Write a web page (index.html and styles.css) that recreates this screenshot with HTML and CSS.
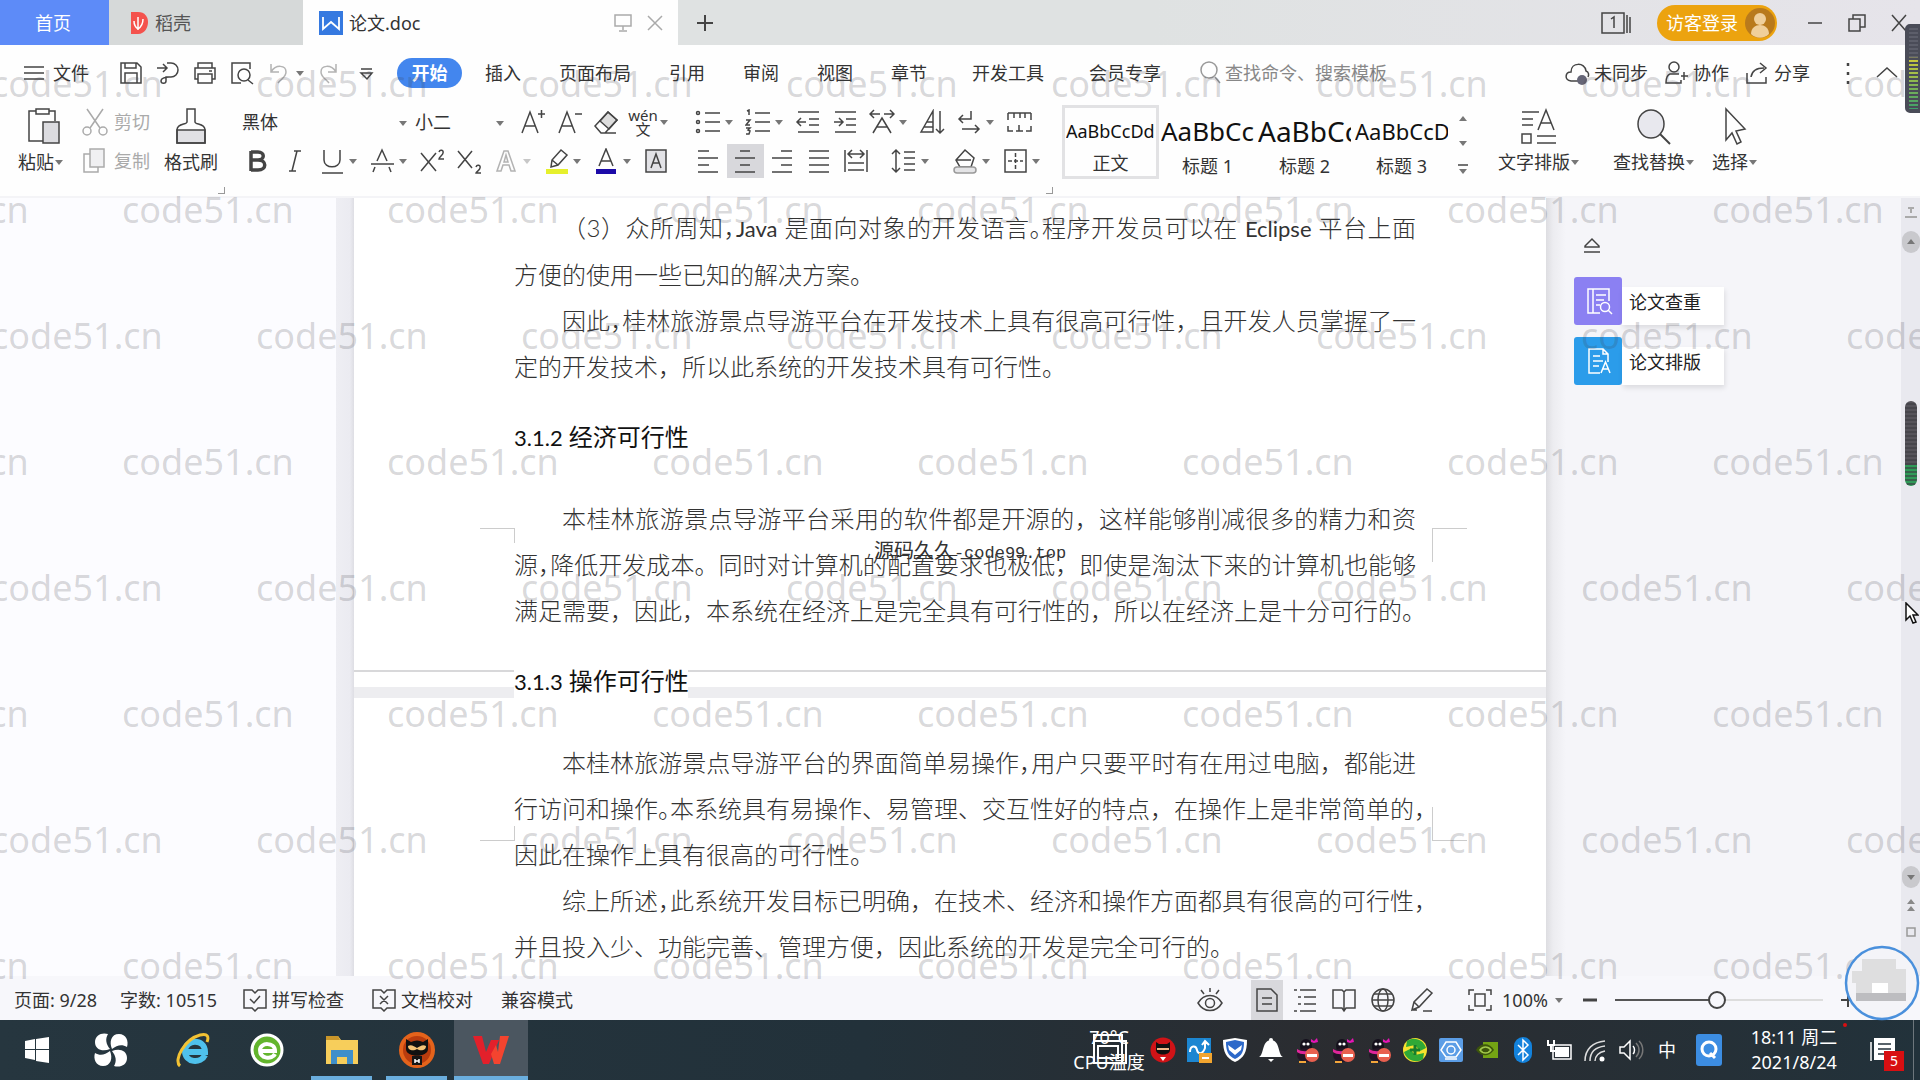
FILE: index.html
```html
<!DOCTYPE html>
<html lang="zh-CN">
<head>
  <meta charset="UTF-8" />
  <meta name="viewport" content="width=device-width, initial-scale=1.0" />
  <title>论文.doc</title>
  <link rel="stylesheet" href="styles.css">
</head>
<body>
  <svg class="sprite" aria-hidden="true">
    <symbol id="caret" viewBox="0 0 10 8"><path d="M1 2h8L5 7z" fill="#777" stroke="none"/></symbol>
    <symbol id="penguin" viewBox="0 0 26 26">
      <ellipse cx="12" cy="9" rx="6" ry="7" fill="#15101c"/><ellipse cx="12" cy="18" rx="9" ry="7" fill="#231526"/>
      <circle cx="10" cy="7" r="1.600" fill="#fff"/><circle cx="14" cy="7" r="1.600" fill="#fff"/>
      <path d="M17 2l3 2 3-3 1 4-4 1-3-1z" fill="#e515b5"/><path d="M3 12c5 3 11 3 15 0l1 3c-5 3-12 3-16 0z" fill="#e0259a"/>
      <circle cx="18" cy="18" r="7" fill="#e8604f"/><rect x="13" y="17" width="10" height="3" fill="#fff"/><path d="M5 25h7" stroke="#f3a63b" stroke-width="2"/>
    </symbol>
  </svg>

  <!-- Barra de abas -->
  <header class="titlebar">
    <button class="tab home">首页</button>
    <button class="tab docer">
      <svg width="20" height="24" viewBox="0 0 20 24"><path d="M2 1h7c7 0 10 5 10 10s-3 12-10 12H2z" fill="#f4524d"/><path d="M9 6v13M5 10c0 4 1 6 4 8M14 8c0 5-2 8-5 10" stroke="#fff" stroke-width="1.500" fill="none"/></svg>
      稻壳
    </button>
    <div class="tab active">
      <svg width="24" height="24" viewBox="0 0 24 24"><path d="M0 0h24v24H0z" fill="#3579e0"/><path d="M4 6v12l8-7 8 7V6" stroke="#fff" stroke-width="1.800" fill="none"/></svg>
      <span>论文.doc</span>
      <button class="mini push" aria-label="显示"><svg width="20" height="20" viewBox="0 0 20 20"><path d="M2 2h16v11H2zM10 13v4M6 18h8" stroke="#aaa"/></svg></button>
      <button class="mini" aria-label="关闭标签"><svg width="20" height="20" viewBox="0 0 20 20"><path d="M3 3l14 14M17 3L3 17" stroke="#999"/></svg></button>
    </div>
    <button class="mini add" aria-label="新建"><svg width="20" height="20" viewBox="0 0 20 20"><path d="M10 2v16M2 10h16" stroke-width="2"/></svg></button>
    <div class="window-tools">
      <button class="mini" aria-label="窗口"><svg width="32" height="24" viewBox="0 0 32 24"><path d="M2 2h22v20H2zM27 4v18M30 6v16M11 8l3-2v11"/></svg></button>
      <button class="login">访客登录
        <svg width="30" height="30" viewBox="0 0 30 30"><circle cx="15" cy="15" r="15" fill="#b97a1c"/><circle cx="15" cy="11" r="6" fill="#f0cf9a"/><path d="M6 26c0-12 18-12 18 0-5 5-13 5-18 0z" fill="#f0cf9a"/></svg>
      </button>
      <button class="mini win" aria-label="最小化"><svg width="20" height="20" viewBox="0 0 20 20"><path d="M3 10h14"/></svg></button>
      <button class="mini win" aria-label="还原"><svg width="20" height="20" viewBox="0 0 20 20"><path d="M2 6h11v12H2zM6 6V2h12v12h-5"/></svg></button>
      <button class="mini win" aria-label="关闭"><svg width="20" height="20" viewBox="0 0 20 20"><path d="M3 2l14 16M17 2L3 18"/></svg></button>
    </div>
  </header>

  <!-- Menu -->
  <nav class="menubar">
    <button class="file"><svg width="22" height="18" viewBox="0 0 22 18"><path d="M1 3h20M1 9h20M1 15h20"/></svg>文件</button>
    <div class="quick">
      <button aria-label="保存"><svg width="26" height="26" viewBox="0 0 26 26"><path d="M3 3h16l4 4v16H3zM7 3v5h11V3M7 23V13h12v10"/></svg></button>
      <button aria-label="输出"><svg width="26" height="26" viewBox="0 0 26 26"><path d="M2 8h9M8 4l4 4-4 4M12 3h4a7 7 0 0 1 0 14h-5v4c0 3-5 3-5 0s5-4 8-4"/></svg></button>
      <button aria-label="打印"><svg width="26" height="26" viewBox="0 0 26 26"><path d="M6 8V3h14v5M6 19H3V8h20v11h-3M6 14h14v9H6zM17 11h3"/></svg></button>
      <button aria-label="打印预览"><svg width="26" height="26" viewBox="0 0 26 26"><path d="M12 23H3V3h18v6M19 20l5 4"/><circle cx="15" cy="15" r="6"/></svg></button>
      <button aria-label="撤销" class="off"><svg width="26" height="26" viewBox="0 0 26 26"><path d="M5 4v8h8M5 12c5-8 15-7 15 0 0 5-4 6-8 11"/></svg></button>
      <svg class="caret" width="10" height="8"><use href="#caret"/></svg>
      <button aria-label="恢复" class="off redo"><svg width="26" height="26" viewBox="0 0 26 26"><path d="M20 4v8h-8M20 12c-5-8-15-7-15 0 0 5 4 6 8 11"/></svg></button>
      <button aria-label="更多"><svg width="26" height="26" viewBox="0 0 26 26"><path d="M8 9h11M8 13h11l-5 6z"/></svg></button>
    </div>
    <div class="menu">
      <button class="on">开始</button>
      <button>插入</button>
      <button>页面布局</button>
      <button>引用</button>
      <button>审阅</button>
      <button>视图</button>
      <button>章节</button>
      <button class="wide">开发工具</button>
      <button class="wide">会员专享</button>
    </div>
    <div class="search">
      <svg width="22" height="26" viewBox="0 0 22 26"><circle cx="10" cy="10" r="8"/><path d="M16 17l5 6"/></svg>
      <input type="text" aria-label="搜索" placeholder="查找命令、搜索模板">
    </div>
    <div class="share">
      <button><svg width="26" height="26" viewBox="0 0 26 26"><path d="M14 21H7c-7-1-6-9 0-9 0-10 14-10 15-1 3 1 3 4 2 6"/><circle cx="18" cy="20" r="5" fill="#667" stroke="none"/></svg>未同步</button>
      <button><svg width="26" height="26" viewBox="0 0 26 26"><circle cx="11" cy="7" r="5"/><path d="M16 14H7c-3 1-4 4-4 9h15v-3M18 16h7M21 12v8"/></svg>协作</button>
      <button><svg width="26" height="26" viewBox="0 0 26 26"><path d="M3 13v10h19v-6M7 17c1-7 6-9 13-9M16 3l6 5-6 5"/></svg>分享</button>
      <button aria-label="更多选项"><svg width="8" height="26" viewBox="0 0 8 26"><path d="M4 3v3M4 12v3M4 21v3" stroke-width="2.500"/></svg></button>
      <button aria-label="折叠"><svg width="24" height="26" viewBox="0 0 24 26"><path d="M2 17L12 8l10 9"/></svg></button>
    </div>
  </nav>

  <!-- Faixa de ferramentas -->
  <section class="ribbon">
    <button class="big paste">
      <svg width="36" height="38" viewBox="0 0 36 38"><path d="M10 4H3v30h14M23 4h6v10M10 2h13v5H10z"/><path d="M17 15h16v21H17z" fill="#dcdce0"/></svg>
      <span>粘贴<svg width="10" height="8"><use href="#caret"/></svg></span>
    </button>
    <div class="clip">
      <button><svg width="26" height="30" viewBox="0 0 26 30"><path d="M5 2l13 19M21 2L8 21"/><circle cx="5" cy="24" r="4"/><circle cx="21" cy="24" r="4"/></svg>剪切</button>
      <button><svg width="26" height="30" viewBox="0 0 26 30"><path d="M8 8H2v18h14v-5"/><path d="M8 3h14v18H8z" fill="#f0f0f2"/></svg>复制</button>
    </div>
    <button class="big painter">
      <svg width="36" height="38" viewBox="0 0 36 38"><path d="M4 23h28v13H4z" fill="#e0e0e4"/><path d="M14 2h8v13c0 3 10 1 10 8v13H4V23c0-7 10-5 10-8z"/></svg>
      <span>格式刷</span>
    </button>

    <div class="tools font">
      <div class="row">
        <span class="pick family"><select aria-label="字体"><option>黑体</option></select><svg width="10" height="8"><use href="#caret"/></svg></span>
        <span class="pick size"><select aria-label="字号"><option>小二</option></select><svg width="10" height="8"><use href="#caret"/></svg></span>
        <button class="tool" aria-label="增大字号"><svg width="26" height="26" viewBox="0 0 26 26"><path d="M3 24L11 3l8 21M6 17h10M19 5h7M22.500 1v8"/></svg></button>
        <button class="tool" aria-label="减小字号"><svg width="26" height="26" viewBox="0 0 26 26"><path d="M3 24L11 3l8 21M6 17h10M19 5h7"/></svg></button>
        <button class="tool" aria-label="清除格式"><svg width="26" height="26" viewBox="0 0 26 26"><path d="M7 12l8-9 9 8-8 9z" fill="#ddd"/><path d="M2 17L15 3l9 8-12 13H8zM8 24h15"/></svg></button>
        <button class="tool drop pinyin" aria-label="拼音指南"><span><b>wén</b><b>文</b></span><svg width="10" height="8"><use href="#caret"/></svg></button>
      </div>
      <div class="row">
        <button class="tool" aria-label="加粗"><svg width="26" height="26" viewBox="0 0 26 26"><path d="M6 3v20M6 4h7c7 0 7 8 0 8H6M13 12c9 0 9 10 0 10H6" stroke-width="3.500"/></svg></button>
        <button class="tool" aria-label="倾斜"><svg width="26" height="26" viewBox="0 0 26 26"><path d="M12 3h7M7 23h7M15 3l-5 20"/></svg></button>
        <button class="tool drop" aria-label="下划线"><svg width="26" height="26" viewBox="0 0 26 26"><path d="M5 2v10c0 9 16 9 16 0V2M3 25h21"/></svg><svg width="10" height="8"><use href="#caret"/></svg></button>
        <button class="tool drop" aria-label="删除线"><svg width="26" height="26" viewBox="0 0 26 26"><path d="M8 13l5-11 5 11M2 16h23M6 19l-2 5M20 19l2 5"/></svg><svg width="10" height="8"><use href="#caret"/></svg></button>
        <button class="tool" aria-label="上标"><svg width="26" height="26" viewBox="0 0 26 26"><path d="M2 5l15 18M17 5L2 23M20 4c1-3 5-2 4 1 0 2-4 4-4 6h5"/></svg></button>
        <button class="tool" aria-label="下标"><svg width="26" height="26" viewBox="0 0 26 26"><path d="M2 3l14 17M16 3L2 20M20 19c1-3 5-2 4 1 0 2-4 4-4 5h5"/></svg></button>
        <button class="tool drop off" aria-label="文字效果"><svg width="26" height="26" viewBox="0 0 26 26"><path d="M4 23L11 3h4l7 20h-4l-2-6h-6l-2 6zM11 14h4l-2-7z"/></svg><svg width="10" height="8"><use href="#caret"/></svg></button>
        <button class="tool drop" aria-label="突出显示"><svg width="26" height="26" viewBox="0 0 26 26"><path d="M3 21h22v5H3z" fill="#e6f02c" stroke="none"/><path d="M8 19l1-7 9-10 6 5-9 10zM9 12l6 5"/></svg><svg width="10" height="8"><use href="#caret"/></svg></button>
        <button class="tool drop" aria-label="字体颜色"><svg width="26" height="26" viewBox="0 0 26 26"><path d="M3 21h20v5H3z" fill="#1c0aa8" stroke="none"/><path d="M6 18l7-17 7 17M8 13h10"/></svg><svg width="10" height="8"><use href="#caret"/></svg></button>
        <button class="tool" aria-label="字符底纹"><svg width="26" height="26" viewBox="0 0 26 26"><path d="M3 2h20v22H3z" fill="#e2e2e6"/><path d="M8 20l5-14 5 14M10 15h6"/></svg></button>
      </div>
    </div>

    <div class="tools para">
      <div class="row">
        <button class="tool drop" aria-label="项目符号"><svg width="26" height="26" viewBox="0 0 26 26"><path d="M10 4h15M10 13h15M10 22h15"/><circle cx="3" cy="4" r="1.500"/><circle cx="3" cy="13" r="1.500"/><circle cx="3" cy="22" r="1.500"/></svg><svg width="10" height="8"><use href="#caret"/></svg></button>
        <button class="tool drop" aria-label="编号"><svg width="26" height="26" viewBox="0 0 26 26"><path d="M10 4h15M10 13h15M10 22h15M2 2l2-1v5M1 11h4l-4 5h4M1 19h4l-2 2 2 1-1 3H1"/></svg><svg width="10" height="8"><use href="#caret"/></svg></button>
        <button class="tool" aria-label="减少缩进"><svg width="26" height="26" viewBox="0 0 26 26"><path d="M3 3h21M14 10h10M14 16h10M3 23h21M2 13h9M6 9l-4 4 4 4"/></svg></button>
        <button class="tool" aria-label="增加缩进"><svg width="26" height="26" viewBox="0 0 26 26"><path d="M3 3h21M14 10h10M14 16h10M3 23h21M2 13h9M7 9l4 4-4 4"/></svg></button>
        <button class="tool drop" aria-label="中文版式"><svg width="26" height="26" viewBox="0 0 26 26"><path d="M4 24l9-15 9 15M8 18h10M1 5h10M5 1L1 5l4 4M15 5h10M21 1l4 4-4 4"/></svg><svg width="10" height="8"><use href="#caret"/></svg></button>
        <button class="tool" aria-label="排序"><svg width="26" height="26" viewBox="0 0 26 26"><path d="M2 23L14 2v21zM8 13h6M5 18h9M21 2v22M17 20l4 4 4-4"/></svg></button>
        <button class="tool drop" aria-label="换行符"><svg width="26" height="26" viewBox="0 0 26 26"><path d="M15 2v8H3M7 6l-4 4 4 4M6 20h17M19 16l4 4-4 4"/></svg><svg width="10" height="8"><use href="#caret"/></svg></button>
        <button class="tool" aria-label="标尺"><svg width="26" height="26" viewBox="0 0 26 26"><path d="M2 4h23M2 4v7M8 4v5M14 4v5M19 4v5M25 4v7M2 17v5h5M13 16v6M10 22h7M25 17v5h-5"/></svg></button>
      </div>
      <div class="row">
        <button class="tool" aria-label="左对齐"><svg width="26" height="26" viewBox="0 0 26 26"><path d="M3 3h11M3 10h20M3 17h11M3 24h20"/></svg></button>
        <button class="tool pressed" aria-label="居中"><svg width="26" height="26" viewBox="0 0 26 26"><path d="M8 3h10M3 10h20M8 17h10M3 24h20"/></svg></button>
        <button class="tool" aria-label="右对齐"><svg width="26" height="26" viewBox="0 0 26 26"><path d="M12 3h11M3 10h20M12 17h11M3 24h20"/></svg></button>
        <button class="tool" aria-label="两端对齐"><svg width="26" height="26" viewBox="0 0 26 26"><path d="M3 3h20M3 10h20M3 17h20M3 24h20"/></svg></button>
        <button class="tool" aria-label="分散对齐"><svg width="26" height="26" viewBox="0 0 26 26"><path d="M2 2v22M24 2v22M5 15h16M5 22h16M5 6h16M9 2L5 6l4 4M17 2l4 4-4 4"/></svg></button>
        <button class="tool drop spaced" aria-label="行距"><svg width="26" height="26" viewBox="0 0 26 26"><path d="M5 2v22M1 6l4-4 4 4M1 20l4 4 4-4M13 4h11M13 10h11M13 16h11M13 22h11"/></svg><svg width="10" height="8"><use href="#caret"/></svg></button>
        <button class="tool drop spaced" aria-label="底纹"><svg width="26" height="26" viewBox="0 0 26 26"><path d="M4 12L13 2l9 8-3 9H8zM4 12h15"/><rect x="2" y="19" width="22" height="6" rx="3" fill="#e4e4e6" stroke="#999"/></svg><svg width="10" height="8"><use href="#caret"/></svg></button>
        <button class="tool drop" aria-label="边框"><svg width="26" height="26" viewBox="0 0 26 26"><path d="M3 2h21v22H3z"/><path d="M13.500 5v16M6 13h15" stroke-dasharray="4 2"/></svg><svg width="10" height="8"><use href="#caret"/></svg></button>
      </div>
    </div>

    <div class="styles">
      <button class="style chosen"><span class="s18">AaBbCcDd</span>正文</button>
      <button class="style"><span class="s26">AaBbCc</span>标题 1</button>
      <button class="style"><span class="s28">AaBbCc</span>标题 2</button>
      <button class="style"><span class="s22">AaBbCcD</span>标题 3</button>
      <div class="arrows">
        <button aria-label="上一行"><svg class="up" width="10" height="8"><use href="#caret"/></svg></button>
        <button aria-label="下一行"><svg width="10" height="8"><use href="#caret"/></svg></button>
        <button aria-label="展开"><svg width="10" height="12" viewBox="0 0 10 12"><path d="M0 2h10"/><path d="M1 6h8l-4 5z" fill="#777" stroke="none"/></svg></button>
      </div>
    </div>
    <button class="big layout">
      <svg width="36" height="38" viewBox="0 0 36 38"><path d="M1 5h17M1 12h11M1 18h11M1 27h9v9H1zM16 29h19M16 36h19M17 23l8-20 8 20M20 16h10"/></svg>
      <span>文字排版<svg width="10" height="8"><use href="#caret"/></svg></span>
    </button>
    <button class="big find">
      <svg width="36" height="38" viewBox="0 0 36 38"><ellipse cx="15" cy="17" rx="13" ry="14" fill="#e8e8ee"/><path d="M24 27l10 10" stroke-width="2"/></svg>
      <span>查找替换<svg width="10" height="8"><use href="#caret"/></svg></span>
    </button>
    <button class="big choose">
      <svg width="36" height="38" viewBox="0 0 36 38"><path d="M9 2l19 20-9 2 5 11-4 2-5-11-6 7z"/></svg>
      <span>选择<svg width="10" height="8"><use href="#caret"/></svg></span>
    </button>
  </section>

  <main class="workspace">
    <div class="gutter"></div>

    <article class="paper">
      <div class="page-gap"></div>
      <i class="crop foot left"></i><i class="crop foot right"></i>
      <i class="crop head left"></i><i class="crop head right"></i>

      <p>
        <span class="first">（3）众所周知<em>，</em><b>Java</b> 是面向对象的开发语言<em>。</em>程序开发员可以在 <b>Eclipse</b> 平台上面</span>
        <span class="end">方便的使用一些已知的解决方案。</span>
      </p>
      <p>
        <span class="first">因此<em>，</em>桂林旅游景点导游平台在开发技术上具有很高可行性，且开发人员掌握了一</span>
        <span class="end">定的开发技术，所以此系统的开发技术具有可行性。</span>
      </p>
      <h3><b>3.1.2</b> 经济可行性</h3>
      <p>
        <span class="first">本桂林旅游景点导游平台采用的软件都是开源的，这样能够削减很多的精力和资</span>
        <span>源<em>，</em>降低开发成本。同时对计算机的配置要求也极低，即使是淘汰下来的计算机也能够</span>
        <span>满足需要，因此，本系统在经济上是完全具有可行性的，所以在经济上是十分可行的。</span>
      </p>
      <h3><b>3.1.3</b> 操作可行性</h3>
      <p>
        <span class="first">本桂林旅游景点导游平台的界面简单易操作<em>，</em>用户只要平时有在用过电脑，都能进</span>
        <span>行访问和操作<em>。</em>本系统具有易操作、易管理、交互性好的特点，在操作上是非常简单的<em>，</em></span>
        <span class="end">因此在操作上具有很高的可行性。</span>
      </p>
      <p>
        <span class="first">综上所述<em>，</em>此系统开发目标已明确，在技术、经济和操作方面都具有很高的可行性<em>，</em></span>
        <span class="end">并且投入少、功能完善、管理方便，因此系统的开发是完全可行的。</span>
      </p>
    </article>

    <aside class="panel">
      <button class="eject" aria-label="收起"><svg width="18" height="18" viewBox="0 0 18 18"><path d="M2 10l7-7 7 7v1H2zM1 16h16"/></svg></button>
      <button class="card purple">
        <svg width="48" height="48" viewBox="0 0 48 48"><path d="M26 36H14V12h21v12M19 12v24M22 18h10M22 23h8M22 28h4M34 33l4 4"/><circle cx="31" cy="30" r="4.500"/></svg>
        <span>论文查重</span>
      </button>
      <button class="card blue">
        <svg width="48" height="48" viewBox="0 0 48 48"><path d="M26 36H15V12h14l5 5v8M29 12v5h5M19 19h7M19 24h10M19 29h6M27 36l4.500-11L36 36M29 32h5"/></svg>
        <span>论文排版</span>
      </button>
    </aside>

    <div class="scrollbar">
      <svg class="split" width="12" height="12" viewBox="0 0 12 12"><path d="M3 1h6M6 1v5M0 10h12" stroke="#aaa" stroke-width="2"/></svg>
      <button class="knob" aria-label="向上"><svg width="10" height="8" class="up"><use href="#caret"/></svg></button>
      <div class="thumb"></div>
      <button class="knob down" aria-label="向下"><svg width="10" height="8"><use href="#caret"/></svg></button>
      <svg width="12" height="14" viewBox="0 0 12 14"><path d="M6 1l4 5H2zM6 8l4 5H2z" fill="#888" stroke="none"/></svg>
      <svg class="ball" width="12" height="12" viewBox="0 0 12 12"><path d="M2 2h8v8H2z" stroke="#999"/></svg>
    </div>
  </main>

  <!-- Barra de status -->
  <footer class="status">
    <span class="pages">页面: 9/28</span>
    <span class="words">字数: 10515</span>
    <button class="check"><svg width="24" height="24" viewBox="0 0 24 24"><path d="M1 2h8l3 3 3-3h8v18h-8l-3 3-3-3H1zM7 11l4 4 6-7"/></svg>拼写检查</button>
    <button class="check"><svg width="24" height="24" viewBox="0 0 24 24"><path d="M1 2h8l3 3 3-3h8v18h-8l-3 3-3-3H1zM8 8l8 8M16 8l-8 8"/></svg>文档校对</button>
    <span>兼容模式</span>
    <div class="views">
      <button class="eye" aria-label="护眼"><svg width="26" height="26" viewBox="0 0 26 26"><path d="M1 16c6-10 18-10 24 0-6 10-18 10-24 0zM13 1v4M4 3l3 4M22 3l-3 4"/><circle cx="13" cy="16" r="4.500"/></svg></button>
      <button class="pressed" aria-label="页面视图"><svg width="26" height="26" viewBox="0 0 26 26"><path d="M3 2h14l6 6v16H3zM8 11h10M8 17h10"/></svg></button>
      <button aria-label="大纲"><svg width="26" height="26" viewBox="0 0 26 26"><path d="M2 3h3M8 3h16M6 10h3M12 10h12M6 17h3M12 17h12M2 24h3M8 24h16"/></svg></button>
      <button aria-label="阅读"><svg width="26" height="26" viewBox="0 0 26 26"><path d="M2 3h9l2 2 2-2h9v18h-9l-2 3-2-3H2zM13 5v19"/></svg></button>
      <button aria-label="Web 版式"><svg width="26" height="26" viewBox="0 0 26 26"><circle cx="13" cy="13" r="11"/><ellipse cx="13" cy="13" rx="5" ry="11"/><path d="M2 13h22M4 7h18M4 19h18"/></svg></button>
      <button aria-label="写作"><svg width="26" height="26" viewBox="0 0 26 26"><path d="M3 23l2-8L18 2l5 4-13 14zM3 23h5M14 24h9M5 15l5 5"/></svg></button>
      <button class="fit" aria-label="适合页面"><svg width="26" height="26" viewBox="0 0 26 26"><path d="M2 8V3h5M19 3h5v5M24 18v5h-5M7 23H2v-5M8 7h10v12H8z"/></svg></button>
      <button class="percent">100%<svg width="10" height="8"><use href="#caret"/></svg></button>
      <button class="zoom" aria-label="缩小"><svg width="16" height="16" viewBox="0 0 16 16"><path d="M1 8h14" stroke-width="3"/></svg></button>
      <input type="range" min="0" max="100" value="49" aria-label="缩放">
      <button class="zoom" aria-label="放大"><svg width="16" height="16" viewBox="0 0 16 16"><path d="M1 8h14M8 1v14" stroke-width="2"/></svg></button>
    </div>
  </footer>

  <!-- Barra de tarefas -->
  <div class="taskbar">
    <button aria-label="开始菜单"><svg width="26" height="26" viewBox="0 0 26 26"><path d="M1 4l10-2v10H1zM12 2l13-2v12H12zM1 13h10v10L1 21zM12 13h13v13l-13-2z" fill="#fff"/></svg></button>
    <button aria-label="搜狗"><svg width="36" height="36" viewBox="0 0 36 36"><g fill="#fff"><path d="M17 17C10 20 2 18 2 10 2 3 9 0 15 2c-3 5-2 10 2 15z"/><path d="M19 17c-3-7-1-15 7-15 7 0 10 7 8 13-5-3-10-2-15 2z"/><path d="M19 19c7-3 15-1 15 7 0 7-7 10-13 8 3-5 2-10-2-15z"/><path d="M17 19c3 7 1 15-7 15-7 0-10-7-8-13 5 3 10 2 15-2z"/></g></svg></button>
    <button class="ie" aria-label="Internet Explorer"><svg width="36" height="36" viewBox="0 0 36 36"><path d="M30 23c-4 9-20 8-20-4 0-12 20-13 20 1H11" stroke="#4fc1ec" stroke-width="6" fill="none"/><path d="M5 34C-2 28 10 7 25 3c8-2 9 2 7 7" stroke="#f3c233" stroke-width="3" fill="none"/></svg></button>
    <button aria-label="浏览器"><svg width="36" height="36" viewBox="0 0 36 36"><circle cx="18" cy="18" r="15" fill="#63b52d" stroke="#fff" stroke-width="3"/><path d="M26 22c-3 6-15 5-15-4 0-8 15-8 15 1H12" stroke="#fff" stroke-width="4" fill="none"/></svg></button>
    <button class="open" aria-label="文件夹"><svg width="34" height="30" viewBox="0 0 34 30"><path d="M1 1h12l3 4h17v24H1z" fill="#f7ce5b"/><path d="M1 1h12l2 4H1z" fill="#c9962a"/><path d="M6 15h22v14h-6v-7H12v7H6z" fill="#3f8fca"/></svg></button>
    <button class="open" aria-label="忍者"><svg width="38" height="38" viewBox="0 0 38 38"><circle cx="19" cy="19" r="18" fill="#e4631b"/><circle cx="19" cy="19" r="14" fill="#b93c0e"/><path d="M8 8l5 3c4-2 8-2 12 0l5-3v10c0 9-22 9-22 0z" fill="#111"/><path d="M10 15c3-2 6 0 9 2 3-2 6-4 9-2 0 5-6 5-9 3-3 2-9 2-9-3z" fill="#f4c376"/><path d="M14 25h10v9H14z" fill="#161616"/><path d="M17 28v4M21 28v4M17 30h4" stroke="#fff"/></svg></button>
    <button class="open current" aria-label="WPS"><svg width="38" height="32" viewBox="0 0 38 32"><path d="M1 2h9l4 16L19 6h8L17 30h-6z" fill="#e3202b"/><path d="M28 2h9l-9 28h-6l-3-10 5-9 2 7z" fill="#f4442f"/></svg></button>

    <div class="tray">
      <div class="cpu"><span>70°C</span><span>CPU温度</span>
        <svg width="36" height="36" viewBox="0 0 36 36"><path d="M3 2h28v28H3zM3 8h28M7 13h20v12H7zM31 8h4v22h-4" stroke="#fff" stroke-width="2"/></svg>
      </div>
      <button aria-label="忍者助手"><svg width="26" height="26" viewBox="0 0 26 26"><circle cx="13" cy="13" r="12.500" fill="#d01317"/><path d="M6 5l3 2h8l3-2v8c0 6-14 6-14 0z" fill="#111"/><path d="M7 12h12" stroke="#f2b98b" stroke-width="2"/><path d="M10 20h6l-3 4z" fill="#fff"/></svg></button>
      <button aria-label="同步"><svg width="26" height="26" viewBox="0 0 26 26"><path d="M1 1h24v24H1z" fill="#1c86d1"/><path d="M4 15c0-7 6-7 7-2s6 4 8-2V5M16 8l3-4 4 4" stroke="#fff" stroke-width="2" fill="none"/><path d="M13 16h13v10H13z" fill="#f2a52f"/><path d="M16 21h7" stroke="#fff" stroke-width="2"/></svg></button>
      <button aria-label="卫士"><svg width="26" height="26" viewBox="0 0 26 26"><path d="M1 3l12-2 12 2c0 12-3 18-12 22C4 21 1 15 1 3z" fill="#fff"/><path d="M4 5l9-2 9 2c0 9-2 14-9 17C6 19 4 14 4 5z" fill="#2d69c9"/><path d="M6 8l7 5 7-5-1 5-6 5-6-5z" fill="#fff"/></svg></button>
      <button aria-label="提醒"><svg width="26" height="26" viewBox="0 0 26 26"><path d="M1 20c5-2 3-17 12-17s7 15 12 17z" fill="#fff"/><circle cx="13" cy="3" r="2" fill="#fff"/><path d="M10 22h6l-3 3z" fill="#fff"/></svg></button>
      <button aria-label="QQ"><svg width="26" height="26"><use href="#penguin"/></svg></button>
      <button aria-label="QQ"><svg width="26" height="26"><use href="#penguin"/></svg></button>
      <button aria-label="QQ"><svg width="26" height="26"><use href="#penguin"/></svg></button>
      <button aria-label="安全"><svg width="26" height="26" viewBox="0 0 26 26"><circle cx="13" cy="13" r="12" fill="#f6e22e"/><path d="M5 4c7-5 17-1 19 7l-6 3-5-6-9 2zM21 22c-7 5-17 1-19-7l6-3 5 6 9-2z" fill="#2fa836"/><path d="M13 8v10M8 13h10" stroke="#157d2c" stroke-width="3"/></svg></button>
      <button aria-label="设置"><svg width="26" height="26" viewBox="0 0 26 26"><rect x="1" y="1" width="24" height="24" rx="2" fill="#5b9de6"/><path d="M8 5h10l5 8-5 7H8l-5-7z" stroke="#fff" stroke-width="1.500" fill="none"/><circle cx="13" cy="13" r="4" stroke="#fff" stroke-width="1.500" fill="none"/><path d="M7 22h12" stroke="#fff"/></svg></button>
      <button aria-label="NVIDIA"><svg width="26" height="26" viewBox="0 0 26 26"><path d="M9 5h15v16H9z" fill="#74a414"/><path d="M2 13c5-8 14-7 18 0-5 7-13 7-18 0z" fill="#3d560b"/><path d="M6 13c3-4 8-4 11 0-3 4-8 4-11 0z" stroke="#a3c94c" fill="none"/></svg></button>
      <button aria-label="蓝牙"><svg width="26" height="26" viewBox="0 0 26 26"><rect x="4" y="0" width="18" height="26" rx="9" fill="#1382dc"/><path d="M8 8l10 10-5 5V3l5 5L8 18" stroke="#fff" stroke-width="1.500" fill="none"/></svg></button>
      <button aria-label="电源"><svg width="26" height="26" viewBox="0 0 26 26"><path d="M2 3v5h6V3M5 8v6h4" stroke="#fff" stroke-width="2" fill="none"/><path d="M9 10h14v10H9z" fill="#fff"/><path d="M7 8h18v14H7z" stroke="#fff" fill="none"/></svg></button>
      <button aria-label="网络"><svg width="26" height="26" viewBox="0 0 26 26"><path d="M3 24C3 12 11 5 23 4M8 24c0-9 6-14 15-15M13 24c0-5 4-9 10-10" stroke="#ddd" stroke-width="1.500" fill="none"/><circle cx="20" cy="22" r="2.500" fill="#fff"/></svg></button>
      <button aria-label="音量"><svg width="26" height="26" viewBox="0 0 26 26"><path d="M2 10h4l6-6v18l-6-6H2zM15 9c2 2 2 6 0 8" stroke="#fff" stroke-width="1.500" fill="none"/><path d="M18 6c4 4 4 10 0 14M21 4c5 5 5 13 0 18" stroke="#777" fill="none"/></svg></button>
      <button class="ime">中</button>
      <button class="qq" aria-label="输入法"><svg width="26" height="32" viewBox="0 0 26 32"><rect width="26" height="32" rx="3" fill="#3c8de2"/><circle cx="13" cy="15" r="7" stroke="#fff" stroke-width="3" fill="none"/><path d="M14 19l5 5" stroke="#fff" stroke-width="3"/></svg></button>
      <div class="clock"><span>18:11 周二</span><span>2021/8/24</span></div>
      <button class="notes" aria-label="通知"><svg width="26" height="26" viewBox="0 0 26 26"><path d="M4 1h21v24l-5-2H4z" fill="#fff"/><path d="M8 7h13M8 12h13M8 17h8" stroke="#22303a" stroke-width="1.500"/><path d="M1 5v19" stroke="#fff"/></svg><span class="badge">5</span></button>
      <i class="peek"></i>
    </div>
  </div>

  <!-- Camadas por cima da janela -->
  <div class="marks" id="marks"></div>
  <div class="stamp">源码久久<span>-code99.top</span></div>
  <div class="meter"></div>
  <svg class="ring" width="76" height="76" viewBox="0 0 76 76"><circle cx="38" cy="38" r="36" fill="#f4f4f8" stroke="#4a90dc" stroke-width="2.500"/><path d="M18 14h34v10h10v30H12V38H8V26h10z" fill="#dededf"/><path d="M28 38h16v10H28z" fill="#fff"/><path d="M12 48h50v8H12z" fill="#bdbdc0"/></svg>
  <svg class="pointer" width="14" height="22" viewBox="0 0 14 22"><path d="M1 1v17l4-4 3 7 3-1-3-7h5z" fill="#fff" stroke="#111"/></svg>

  <script>
    const marks = document.getElementById("marks");

    for (let i = 0; i < 8; i++) {
      const row = document.createElement("div");
      row.className = "marks-row";
      for (let j = 0; j < 8; j++) {
        const mark = document.createElement("span");
        mark.textContent = "code51.cn";
        row.appendChild(mark);
      }
      marks.appendChild(row);
    }
  </script>
</body>
</html>
```

FILE: styles.css
```css
* {
  box-sizing: border-box;
}
body {
  margin: 0;
  height: 100vh;
  display: flex;
  flex-direction: column;
  position: relative;
  overflow: hidden;
  background-color: #fefefe;
  color: #333;
  font-family: "Noto Sans", "Noto Sans CJK SC", sans-serif;
  font-size: 18px;
  line-height: 26px;
}
button {
  padding: 0;
  border: none;
  background: none;
  color: inherit;
  font: inherit;
  white-space: nowrap;
  cursor: pointer;
}
svg {
  display: block;
  flex: none;
  fill: none;
  stroke: #444;
  stroke-width: 1.5px;
}
.sprite {
  position: absolute;
  width: 0;
  height: 0;
}
.up {
  transform: rotate(180deg);
}

/* Barra de abas */
.titlebar {
  height: 45px;
  flex: none;
  display: flex;
  align-items: stretch;
  background-image: linear-gradient(to right, #dfe2e2 60%, #e6e4ea);
}
.tab {
  display: flex;
  align-items: center;
  gap: 6px;
}
.home {
  width: 109px;
  padding-right: 3px;
  justify-content: center;
  background-color: #5d8bf8;
  color: #fff;
}
.docer {
  width: 194px;
  padding-left: 20px;
  background-color: #d6d9d9;
  color: #555;
}
.tab svg path[fill] {
  stroke: none;
}
.tab svg path[stroke] {
  stroke: #fff;
}
.active {
  width: 375px;
  padding: 0 13px 0 16px;
  background-color: #fefefe;
}
.active .mini svg path[stroke] {
  stroke: #aaa;
}
.push {
  margin-left: auto;
  margin-right: 6px;
}
.mini {
  display: flex;
  align-items: center;
}
.add {
  margin-left: 17px;
}
.window-tools {
  margin-left: auto;
  margin-right: 11px;
  display: flex;
  align-items: center;
}
.login {
  display: flex;
  align-items: center;
  gap: 7px;
  height: 36px;
  margin: 0 28px 0 25px;
  padding: 0 2px 0 9px;
  border-radius: 18px;
  background-color: #eca30f;
  color: #fff;
}
.login svg {
  stroke: none;
}
.win {
  margin-left: 22px;
}
.login + .win {
  margin-left: 0;
}

/* Menu */
.menubar {
  height: 56px;
  flex: none;
  display: flex;
  align-items: center;
}
.file {
  display: flex;
  align-items: center;
  gap: 8px;
  margin-left: 23px;
}
.quick {
  display: flex;
  align-items: center;
  gap: 11px;
  margin-left: 29px;
}
.quick .caret {
  margin-left: -8px;
}
.off {
  opacity: 0.4;
}
.menu {
  display: flex;
  align-items: center;
  gap: 38px;
  margin-left: 18px;
}
.menu .on {
  width: 65px;
  height: 30px;
  margin-right: -15px;
  border-radius: 15px;
  background-color: #4386ee;
  color: #fff;
  font-weight: bold;
}
.menu .wide {
  margin-left: 7px;
}
.search {
  display: flex;
  align-items: center;
  gap: 4px;
  margin-left: 38px;
}
.search svg {
  stroke: #999;
}
.search input {
  width: 190px;
  padding: 0;
  border: none;
  outline: none;
  background: none;
  font: inherit;
}
.search input::placeholder {
  color: #888;
}
.share {
  display: flex;
  align-items: center;
  gap: 15px;
  margin-left: auto;
  margin-right: 21px;
}
.share button {
  display: flex;
  align-items: center;
  gap: 4px;
}
.share button:nth-child(4) {
  margin: 0 8px 0 19px;
}

/* Faixa de ferramentas */
.ribbon {
  height: 97px;
  flex: none;
  display: flex;
  align-items: flex-start;
  border-bottom: 2px solid #f4f4f7;
}
.big {
  display: flex;
  flex-direction: column;
  align-items: center;
  gap: 4px;
  padding-top: 6px;
}
.big span {
  display: flex;
  align-items: center;
}
.paste {
  margin-left: 18px;
}
.paste > svg {
  margin-left: 5px;
}
.clip {
  margin-left: 18px;
  display: flex;
  flex-direction: column;
  gap: 9px;
  padding-top: 6px;
  color: #aaa;
}
.clip button {
  display: flex;
  align-items: center;
  gap: 6px;
}
.clip svg {
  stroke: #aaa;
}
.painter {
  margin-left: 14px;
}
.tools {
  position: relative;
  display: flex;
  flex-direction: column;
  gap: 5px;
  padding-top: 4px;
}
/* cantinho que abre a caixa de diálogo do grupo */
.font::before,
.para::after {
  content: "";
  position: absolute;
  top: 86px;
  width: 6px;
  height: 6px;
  border: 1px solid #999;
  border-top: none;
  border-left: none;
}
.font::before {
  left: -22px;
}
.para::after {
  right: -6px;
}
.font {
  margin-left: 22px;
}
.para {
  margin-left: 15px;
}
.row {
  display: flex;
  height: 34px;
}
.tool {
  width: 37px;
  height: 34px;
  padding-left: 5px;
  display: flex;
  align-items: center;
}
.drop {
  width: 50px;
  gap: 3px;
}
.drop.spaced {
  margin-left: 11px;
}
.pressed {
  background-color: #d8d8dc;
}
.pick {
  position: relative;
  height: 34px;
}
.pick select {
  width: 100%;
  height: 34px;
  padding: 0 0 0 2px;
  border: none;
  appearance: none;
  background: none;
  color: inherit;
  font: inherit;
}
.pick svg {
  position: absolute;
  right: 2px;
  top: 14px;
}
.family {
  width: 170px;
}
.size {
  width: 94px;
  margin: 0 7px 0 3px;
}
.pinyin > span {
  width: 26px;
  display: flex;
  flex-direction: column;
  align-items: center;
}
.pinyin b {
  font-size: 15px;
  font-weight: normal;
  line-height: 14px;
}
.styles {
  display: flex;
  margin-left: 15px;
  padding-top: 4px;
}
.style {
  width: 97px;
  height: 74px;
  overflow: hidden;
  display: flex;
  flex-direction: column;
  align-items: center;
  justify-content: flex-end;
}
.style span {
  width: 93px;
  height: 44px;
  flex: none;
  overflow: hidden;
  color: #111;
  line-height: 44px;
  text-align: left;
}
.chosen {
  border: 3px solid #e2e2e4;
}
.chosen span {
  width: 89px;
  margin-bottom: -3px;
}
.s18 {
  font-size: 18px;
}
.s22 {
  font-size: 22px;
}
.s26 {
  font-size: 26px;
}
.s28 {
  font-size: 28px;
}
.arrows {
  display: flex;
  flex-direction: column;
  gap: 16px;
  padding: 10px 0 0 8px;
}
.layout {
  margin-left: 30px;
}
.find {
  margin-left: 33px;
}
.choose {
  margin-left: 17px;
}

/* Documento */
.workspace {
  flex: 1;
  min-height: 0;
  display: grid;
  grid-template-columns: 354px 1fr 355px 19px;
}
.gutter {
  background-image: linear-gradient(to right, #fcfcff 336px, #eeeef3 336px, #ebebf1 350px, #dedee4 354px);
}
.paper {
  position: relative;
  overflow: hidden;
  padding: 7px 130px 0 160px;
  background-color: #fff;
  font-family: Lato, "Noto Sans CJK SC", sans-serif;
  font-size: 24px;
  font-weight: 300;
  line-height: 46px;
}
.paper p {
  margin: 0;
}
.paper p span {
  display: block;
  white-space: nowrap;
  text-align: justify;
  text-align-last: justify;
}
.paper p .first {
  margin-left: 48px;
}
.paper p .end {
  text-align-last: left;
}
.paper b {
  font-size: 22px;
  font-weight: normal;
}
/* pontuação de meia largura */
.paper em {
  font-style: normal;
  font-feature-settings: "halt";
}
.paper h3 {
  position: relative;
  width: 174px;
  margin: 24px 0 35px;
  background-color: #fff;
  color: #111;
  font-size: 24px;
  font-weight: normal;
  white-space: nowrap;
}
.page-gap {
  position: absolute;
  left: 0;
  right: 0;
  top: 472px;
  height: 28px;
  border-top: 2px solid #d8d8da;
  border-bottom: 11px solid #ededf0;
}
.crop {
  position: absolute;
  width: 35px;
  height: 15px;
  border: 0 solid #ccc;
}
.left {
  left: 126px;
  border-right-width: 1px;
}
.right {
  right: 79px;
  border-left-width: 1px;
}
.foot {
  top: 330px;
  border-top-width: 1px;
}
.head {
  top: 628px;
  border-bottom-width: 1px;
}
.foot.right,
.head.right {
  height: 34px;
}
.head.right {
  top: 609px;
}

/* Painel lateral */
.panel {
  display: flex;
  flex-direction: column;
  align-items: flex-start;
  gap: 12px;
  padding: 38px 0 0 28px;
  background-image: linear-gradient(to right, #dddde1, #ececf0 7px, #f5f5f9 20px);
}
.eject {
  margin: 0 0 11px 9px;
}
.card {
  display: flex;
  align-items: flex-end;
  color: #222;
}
.card svg {
  border-radius: 3px;
  stroke: #fff;
}
.card span {
  width: 102px;
  height: 38px;
  padding-left: 7px;
  background-color: #fff;
  box-shadow: 1px 3px 5px rgba(0, 0, 0, 0.1);
  line-height: 30px;
  text-align: left;
}
.purple svg {
  background-color: #8b80f2;
}
.blue svg {
  background-color: #2b9cea;
}
.scrollbar {
  display: flex;
  flex-direction: column;
  align-items: center;
  padding: 9px 0 38px;
  background-color: #e9e9ef;
}
.knob {
  width: 18px;
  height: 22px;
  margin-top: 12px;
  padding-left: 4px;
  border-radius: 9px;
  background-color: #c9c9cd;
}
.thumb {
  width: 12px;
  height: 85px;
  margin-top: 148px;
  border-radius: 6px;
  background-image: repeating-linear-gradient(transparent 0 2px, rgba(60, 60, 66, 0.6) 2px 4px), linear-gradient(#55535a 75%, #2f9a58 75%);
}
.down {
  margin-top: auto;
  margin-bottom: 10px;
}
.ball {
  margin-top: 14px;
}

/* Barra de status */
.status {
  height: 44px;
  flex: none;
  display: flex;
  align-items: center;
  padding: 4px 0 0 14px;
  background-color: #f7f7fb;
}
.words {
  margin: 0 26px 0 23px;
}
.check {
  display: flex;
  align-items: center;
  gap: 5px;
  margin-right: 28px;
}
.views {
  display: flex;
  align-items: center;
  margin-left: auto;
  margin-right: 64px;
}
.views button {
  width: 39px;
  height: 40px;
  display: flex;
  align-items: center;
  justify-content: center;
}
.views .eye {
  margin-right: 22px;
}
.views .pressed {
  width: 32px;
  margin-right: 2px;
}
.views .fit {
  margin-left: 19px;
}
.views .percent {
  width: 62px;
  gap: 6px;
  margin: 0 18px 0 3px;
}
.views .zoom {
  width: 16px;
}
.views input {
  width: 208px;
  height: 30px;
  margin: 0 17px;
  appearance: none;
  background: none;
}
.views input::-webkit-slider-runnable-track {
  height: 2px;
  background-image: linear-gradient(to right, #555 49%, #ddd 49%);
}
.views input::-webkit-slider-thumb {
  appearance: none;
  width: 18px;
  height: 18px;
  margin-top: -8px;
  border: 2px solid #444;
  border-radius: 50%;
  background-color: #f7f7fb;
}

/* Barra de tarefas */
.taskbar {
  height: 60px;
  flex: none;
  display: flex;
  background-image: linear-gradient(to right, #26363f, #22313a 45%, #2b2c30 70%, #22323b);
  color: #fff;
}
.taskbar svg {
  stroke: none;
}
.taskbar > button {
  width: 74px;
  display: flex;
  align-items: center;
  justify-content: center;
}
.taskbar .ie {
  margin-left: 8px;
}
.taskbar .open {
  border-bottom: 4px solid #6aaede;
  background-clip: padding-box;
  width: 61px;
  margin: 0 7px;
  padding-top: 4px;
}
.taskbar .current {
  width: 74px;
  margin: 0;
  background-color: #4b5660;
}
.tray {
  display: flex;
  align-items: center;
  margin-left: auto;
  margin-right: 6px;
}
.tray button {
  width: 36px;
  height: 60px;
  display: flex;
  align-items: center;
  justify-content: center;
}
.cpu,
.clock {
  position: relative;
  width: 72px;
  display: flex;
  flex-direction: column;
  align-items: center;
  line-height: 25px;
  white-space: nowrap;
}
.cpu svg {
  position: absolute;
  left: 18px;
  top: 8px;
}
.tray .qq {
  margin-left: 6px;
}
.clock {
  width: 94px;
  margin: 0 22px 0 20px;
}
.clock::after {
  content: "";
  position: absolute;
  right: -6px;
  top: -2px;
  width: 4px;
  height: 4px;
  border-radius: 50%;
  background-color: #d80f12;
}
.tray .notes {
  position: relative;
  width: 40px;
}
.badge {
  position: absolute;
  right: -1px;
  bottom: 9px;
  width: 20px;
  height: 20px;
  background-color: #d80f12;
  font-size: 14px;
  line-height: 20px;
}
.peek {
  width: 1px;
  height: 60px;
  margin-left: 10px;
  background-color: #6d767c;
}

/* Camadas por cima da janela */
.marks {
  position: absolute;
  left: 0;
  right: 0;
  top: 21px;
  height: 958px;
  overflow: hidden;
  pointer-events: none;
  color: rgba(60, 60, 70, 0.2);
  font-size: 36px;
  line-height: 126px;
}
.marks-row {
  display: flex;
  margin-left: -9px;
}
.marks-row:nth-child(even) {
  margin-left: -143px;
}
.marks span {
  flex: 0 0 265px;
}
.stamp {
  position: absolute;
  top: 537px;
  left: 0;
  right: 0;
  padding-left: 20px;
  pointer-events: none;
  font-family: "Noto Sans CJK SC", sans-serif;
  font-size: 20px;
  text-align: center;
}
.stamp span {
  font-family: "Liberation Mono", monospace;
  font-size: 17px;
}
.meter {
  position: absolute;
  right: 0;
  top: 24px;
  width: 15px;
  height: 89px;
  border: 4px solid #4a4c58;
  border-right-width: 2px;
  border-radius: 5px 0 0 5px;
  background-image: repeating-linear-gradient(transparent 0 2px, #4a4c58 2px 4px), linear-gradient(#5c5e6a 35%, #c8c83c 40%, #3fa06a);
}
.ring {
  position: absolute;
  right: 0;
  bottom: 59px;
}
.ring path {
  stroke: none;
}
.pointer {
  position: absolute;
  right: 1px;
  top: 602px;
}
```
